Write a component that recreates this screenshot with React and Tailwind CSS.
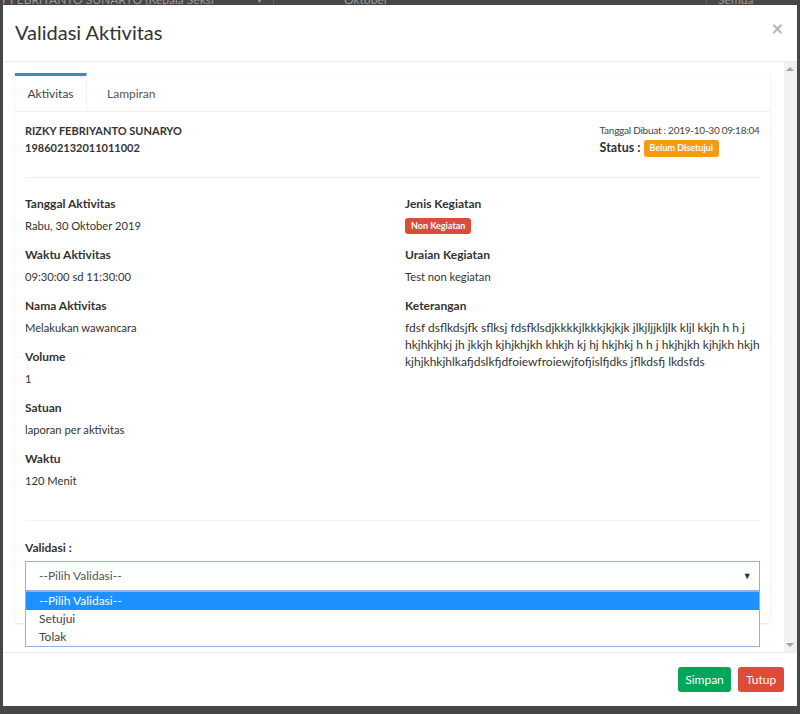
function Field({ label, children }) {
  return (
    <div className="mb-[11px]">
      <div className="text-[12px] leading-[18px] font-bold text-[#333]">{label}</div>
      <div className="mt-[4px] text-[11.2px] leading-[18px] text-[#333]">{children}</div>
    </div>
  );
}

export default function App() {
  return (
    <div
      className="w-[800px] h-[714px] bg-[#474747] overflow-hidden"
      style={{ fontFamily: "Lato, 'Open Sans', sans-serif" }}
    >
      {/* backdrop strip behind the modal */}
      <div className="h-[5px] overflow-hidden">
        <div className="flex items-center -mt-[8px] h-[16px] text-[12px] text-[#9a9a9a] whitespace-nowrap">
          <span className="w-[255px]">Y FEBRIYANTO SUNARYO (Kepala Seksi</span>
          <span className="w-[10px] text-[9px]">▼</span>
          <span className="h-[16px] border-l border-[#666] ml-[8px]"></span>
          <span className="ml-[70px]">Oktober</span>
          <span className="h-[16px] border-l border-[#666] ml-[318px]"></span>
          <span className="ml-[11px]">Semua</span>
        </div>
      </div>

      <div className="ml-[3px] w-[794px] h-[701px] bg-white flex flex-col">
        {/* header */}
        <div className="h-[57px] border-b border-[#ececec] flex items-center justify-between pl-[12px] pr-[14px]">
          <h4 className="text-[20px] leading-[24px] text-[#333] -mt-[3px]">Validasi Aktivitas</h4>
          <span className="text-[20px] leading-none text-[#b5b5b5] font-bold -mt-[10px]">×</span>
        </div>

        {/* body */}
        <div className="h-[590px] flex">
          <div className="flex-1 pt-[11px] pl-[12px] pr-[14px]">
            <div className="bg-white shadow-[0_1px_2px_rgba(0,0,0,0.12)]">
              {/* tabs */}
              <div className="flex h-[39px] border-b border-[#f0f0f0]">
                <div className="w-[72px] border-t-[3px] border-[#3c8dbc] border-r border-r-[#f0f0f0] flex items-center justify-center text-[12px] text-[#444]">
                  Aktivitas
                </div>
                <div className="ml-[20px] flex items-center text-[12px] text-[#555] pt-[3px]">Lampiran</div>
              </div>

              <div className="px-[10px] pt-[10px] pb-[32px] relative">
                <div className="flex justify-between">
                  <div className="text-[11px] leading-[17px] font-bold text-[#333]">
                    <div>RIZKY FEBRIYANTO SUNARYO</div>
                    <div>198602132011011002</div>
                  </div>
                  <div className="w-[160px]">
                    <div className="text-[10px] tracking-[-0.25px] leading-[17px] text-[#444] whitespace-nowrap">
                      Tanggal Dibuat : 2019-10-30 09:18:04
                    </div>
                    <div className="flex items-center h-[18px]">
                      <span className="text-[12.5px] font-bold text-[#333]">Status :</span>
                      <span className="ml-[3px] h-[17px] px-[6px] rounded-[3px] bg-[#f39c12] text-white text-[9px] font-bold flex items-center">
                        Belum Disetujui
                      </span>
                    </div>
                  </div>
                </div>

                <div className="mt-[20px] border-t border-[#eeeeee]"></div>

                <div className="mt-[17px] grid grid-cols-[380px_1fr]">
                  <div>
                    <Field label="Tanggal Aktivitas">Rabu, 30 Oktober 2019</Field>
                    <Field label="Waktu Aktivitas">09:30:00 sd 11:30:00</Field>
                    <Field label="Nama Aktivitas">Melakukan wawancara</Field>
                    <Field label="Volume">1</Field>
                    <Field label="Satuan">laporan per aktivitas</Field>
                    <Field label="Waktu">120 Menit</Field>
                  </div>
                  <div>
                    <div className="mb-[11px]">
                      <div className="text-[12px] leading-[18px] font-bold text-[#333]">Jenis Kegiatan</div>
                      <div className="mt-[4px] h-[18px] flex items-center">
                        <span className="h-[16px] px-[6px] rounded-[3px] bg-[#dd4b39] text-white text-[9px] font-bold flex items-center">
                          Non Kegiatan
                        </span>
                      </div>
                    </div>
                    <Field label="Uraian Kegiatan">Test non kegiatan</Field>
                    <div>
                      <div className="text-[12px] leading-[18px] font-bold text-[#333]">Keterangan</div>
                      <div className="mt-[4px] text-[12px] leading-[17px] text-[#333] whitespace-nowrap">
                        <div>fdsf dsflkdsjfk sflksj fdsfklsdjkkkkjlkkkjkjkjk jlkjljjkljlk kljl kkjh h h j</div>
                        <div>hkjhkjhkj jh jkkjh kjhjkhjkh khkjh kj hj hkjhkj h h j hkjhjkh kjhjkh hkjh</div>
                        <div>kjhjkhkjhlkafjdslkfjdfoiewfroiewjfofjislfjdks jflkdsfj lkdsfds</div>
                      </div>
                    </div>
                  </div>
                </div>

                <div className="mt-[19px] border-t border-[#f2f2f2]"></div>

                <div className="mt-[18px] text-[12px] leading-[18px] font-bold text-[#333]">Validasi :</div>
                <div className="mt-[4px] relative">
                  <div className="h-[30px] border border-[#8fb3dd] flex items-center justify-between pl-[13px] pr-[7px] text-[12px] text-[#555]">
                    <span>--Pilih Validasi--</span>
                    <span className="text-[9px] text-[#333]">▼</span>
                  </div>
                  <div className="absolute left-0 right-0 top-[30px] bg-white border border-[#8fb3dd] text-[12px] text-[#444] z-10">
                    <div className="h-[18px] bg-[#1e90ff] text-white pl-[13px] flex items-center">--Pilih Validasi--</div>
                    <div className="h-[18px] pl-[13px] flex items-center">Setujui</div>
                    <div className="h-[18px] pl-[13px] flex items-center">Tolak</div>
                  </div>
                </div>
              </div>
            </div>
          </div>

          {/* scrollbar */}
          <div className="w-[14px] bg-[#f1f1f1] flex flex-col items-center justify-between py-[5px]">
            <span className="w-0 h-0 border-l-[4px] border-r-[4px] border-b-[4px] border-l-transparent border-r-transparent border-b-[#a3a3a3]"></span>
            <span className="w-0 h-0 border-l-[4px] border-r-[4px] border-t-[4px] border-l-transparent border-r-transparent border-t-[#a3a3a3]"></span>
          </div>
        </div>

        {/* footer */}
        <div className="flex-1 border-t border-[#ececec] flex justify-end items-start pt-[14px] pr-[13px] gap-[7px]">
          <button className="h-[25px] w-[53px] rounded-[3px] bg-[#00a65a] text-white text-[12px]">Simpan</button>
          <button className="h-[25px] w-[46px] rounded-[3px] bg-[#dd4b39] text-white text-[12px]">Tutup</button>
        </div>
      </div>
    </div>
  );
}
